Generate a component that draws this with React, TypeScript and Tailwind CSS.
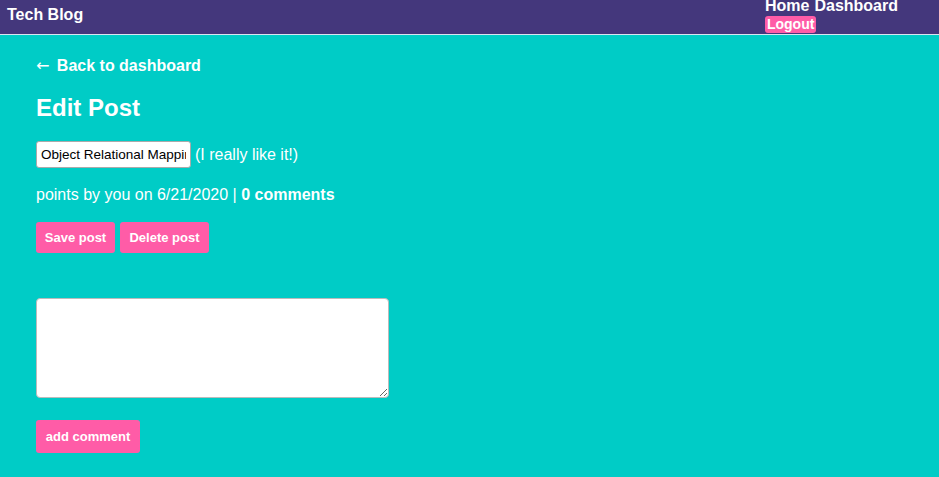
export default function App() {
  return (
    <div className="min-h-[477px] bg-[#00ccc6] font-['Liberation_Sans',Arial,sans-serif] text-white">
      {/* Header */}
      <header className="flex h-[35px] justify-between border-b border-[#d9e4f0] bg-[#44377c] pl-[7px] pr-[41px]">
        <h1 className="pt-[6px] text-[16px] font-bold leading-[18px]">Tech Blog</h1>
        <nav className="flex flex-col items-start">
          <div className="-mt-[3px] flex gap-[5px] text-[16px] font-bold leading-[18px]">
            <a>Home</a>
            <a>Dashboard</a>
          </div>
          <button className="mt-[1px] rounded-[3px] bg-[#ff5ca7] px-[2px] text-[14px] font-bold leading-[17px]">
            Logout
          </button>
        </nav>
      </header>

      {/* Main */}
      <main className="px-[36px]">
        <a className="mt-[22px] block text-[16px] font-bold leading-[18px]">
          <span className="mr-[3px] font-['DejaVu_Sans',sans-serif] font-normal">←</span> Back to dashboard
        </a>
        <h2 className="mt-[19px] text-[24px] font-bold leading-[28px]">Edit Post</h2>

        <div className="mt-[19px] flex items-center gap-[4px]">
          <input
            defaultValue="Object Relational Mapping"
            className="h-[27px] w-[155px] rounded-[3px] border border-[#aaa] bg-white px-[4px] text-[13.5px] text-black"
          />
          <span className="text-[16px]">(I really like it!)</span>
        </div>

        <p className="mt-[18px] text-[16px] leading-[18px]">
          points by you on 6/21/2020 | <span className="font-bold">0 comments</span>
        </p>

        <div className="mt-[18px] flex gap-[5px]">
          <button className="h-[31px] w-[79px] rounded-[3px] bg-[#ff5ca7] text-[13px] font-bold">Save post</button>
          <button className="h-[31px] w-[89px] rounded-[3px] bg-[#ff5ca7] text-[13px] font-bold">Delete post</button>
        </div>

        <textarea className="mt-[45px] block h-[100px] w-[353px] rounded-[4px] border border-[#bbb] bg-white" />

        <button className="mt-[22px] h-[33px] w-[104px] rounded-[3px] bg-[#ff5ca7] text-[13px] font-bold">
          add comment
        </button>
      </main>
    </div>
  );
}
